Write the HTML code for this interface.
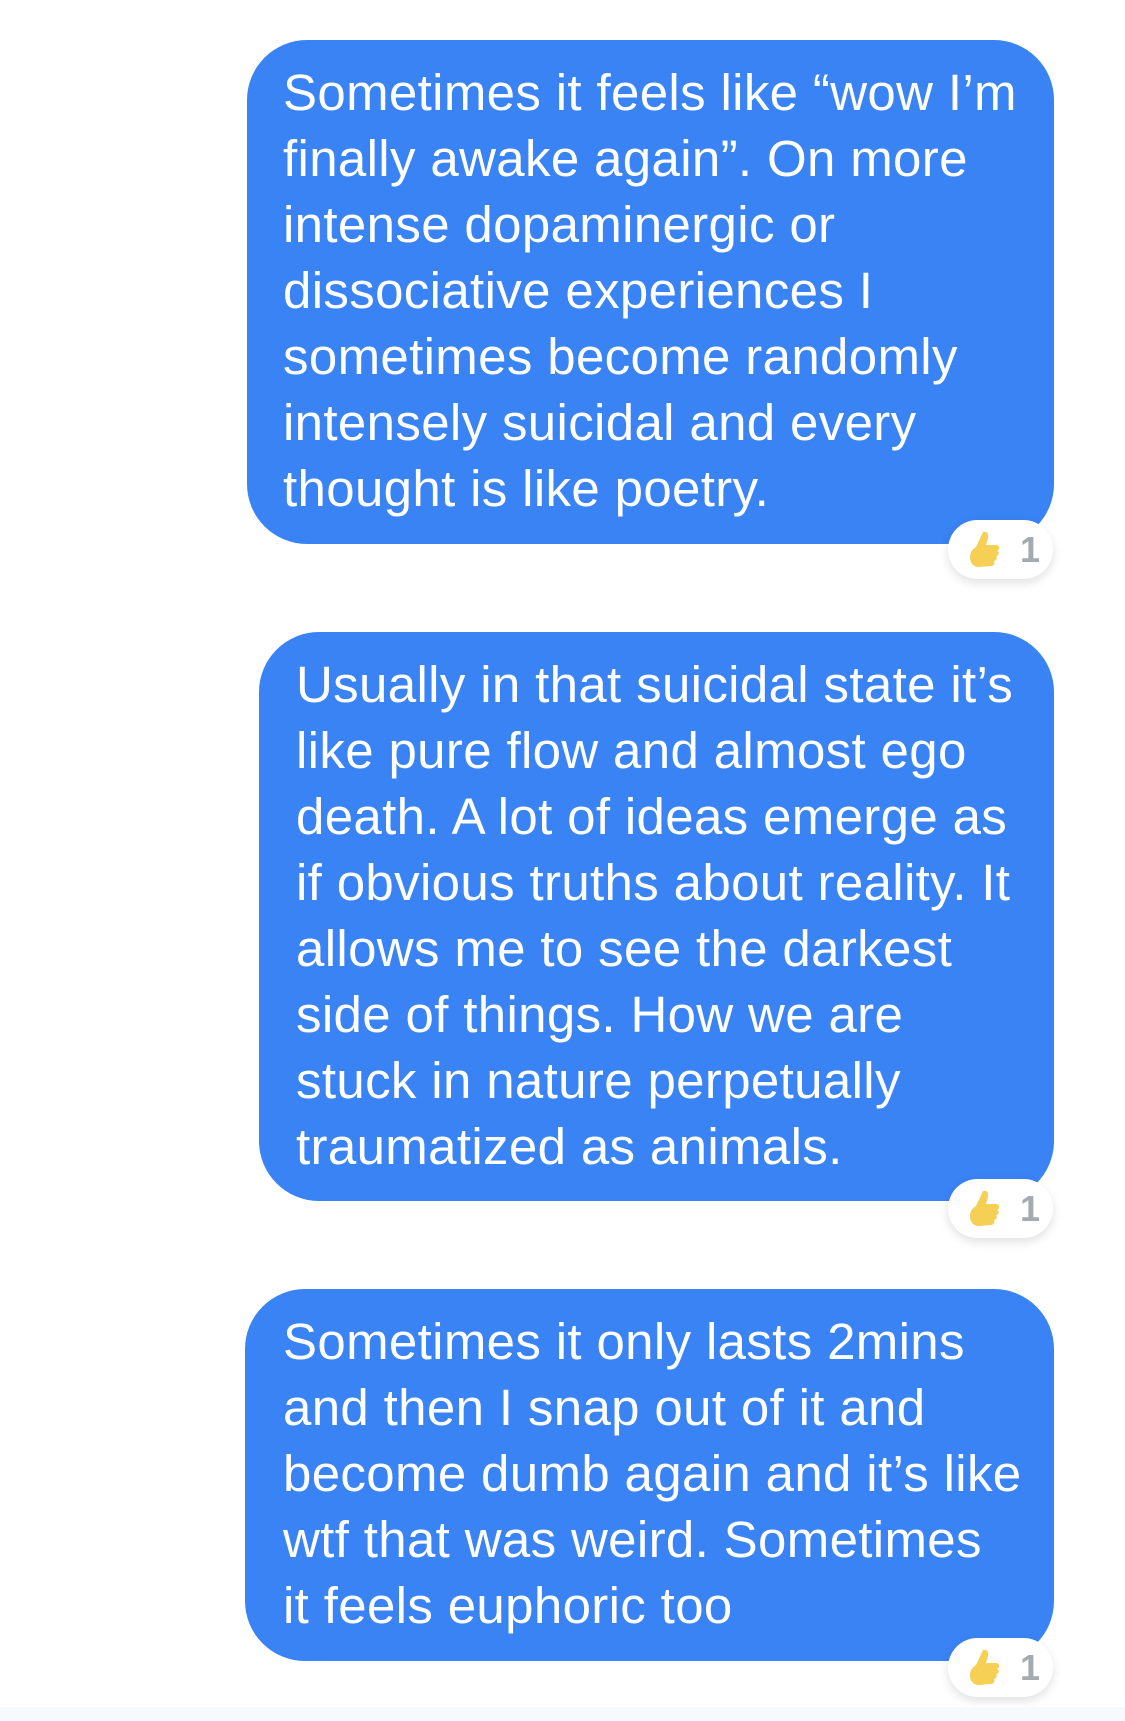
<!DOCTYPE html>
<html><head><style>
html,body{margin:0;padding:0;background:#fff;width:1125px;height:1721px;overflow:hidden;position:relative;font-family:"Liberation Sans",sans-serif}
.b{position:absolute;background:#3A83F4;border-radius:60px;color:#fff;font-size:51px;line-height:66px;box-sizing:border-box;padding-top:20px;white-space:nowrap;letter-spacing:0.35px}
.p{position:absolute;width:105px;height:59px;background:#fff;border-radius:30px;box-shadow:0 4px 10px rgba(0,0,0,0.12);}
.p svg{position:absolute;left:16px;top:9px}
.p span{position:absolute;left:72px;top:10px;font-size:36px;font-weight:bold;color:#A5A9B0;line-height:40px}
</style></head><body>
<div class="b" style="left:247px;top:40px;width:807px;height:504px;padding-left:36px">Sometimes it feels like “wow I’m<br>finally awake again”. On more<br>intense dopaminergic or<br>dissociative experiences I<br>sometimes become randomly<br>intensely suicidal and every<br>thought is like poetry.</div>
<div class="p" style="left:948px;top:520px"><svg width="40" height="42" viewBox="0 0 40 42"><path d="M12 18 L19 3 C23 2 25 5 24 9 L22 16 L32 16 C36 16 36 21 33 22 C36 23 35 27 32 27 C34 29 32 32 30 32 C31 34 30 37 27 37 L15 38 C9 38 6 34 6 28 C6 23 9 20 12 18 Z" fill="#F6CF55"/></svg><span>1</span></div>

<div class="b" style="left:259px;top:632px;width:795px;height:569px;padding-left:37px">Usually in that suicidal state it’s<br>like pure flow and almost ego<br>death. A lot of ideas emerge as<br>if obvious truths about reality. It<br>allows me to see the darkest<br>side of things. How we are<br>stuck in nature perpetually<br>traumatized as animals.</div>
<div class="p" style="left:948px;top:1179px"><svg width="40" height="42" viewBox="0 0 40 42"><path d="M12 18 L19 3 C23 2 25 5 24 9 L22 16 L32 16 C36 16 36 21 33 22 C36 23 35 27 32 27 C34 29 32 32 30 32 C31 34 30 37 27 37 L15 38 C9 38 6 34 6 28 C6 23 9 20 12 18 Z" fill="#F6CF55"/></svg><span>1</span></div>

<div class="b" style="left:245px;top:1289px;width:809px;height:372px;padding-left:38px">Sometimes it only lasts 2mins<br>and then I snap out of it and<br>become dumb again and it’s like<br>wtf that was weird. Sometimes<br>it feels euphoric too</div>
<div class="p" style="left:948px;top:1638px"><svg width="40" height="42" viewBox="0 0 40 42"><path d="M12 18 L19 3 C23 2 25 5 24 9 L22 16 L32 16 C36 16 36 21 33 22 C36 23 35 27 32 27 C34 29 32 32 30 32 C31 34 30 37 27 37 L15 38 C9 38 6 34 6 28 C6 23 9 20 12 18 Z" fill="#F6CF55"/></svg><span>1</span></div>
<div style="position:absolute;left:0;top:1707px;width:1125px;height:14px;background:#F8F9FC"></div>
</body></html>
